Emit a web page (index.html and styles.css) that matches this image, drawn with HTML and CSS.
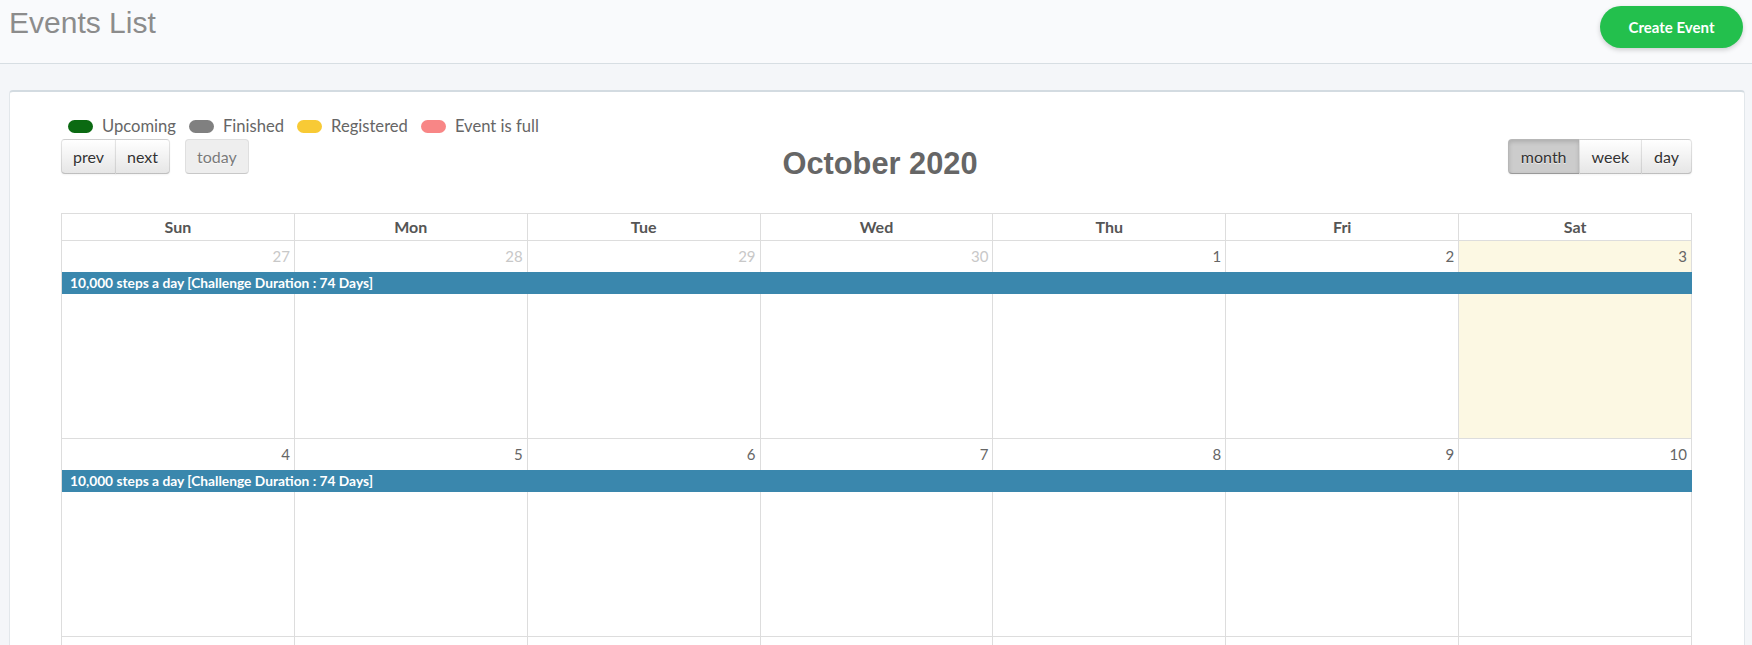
FILE: index.html
```html
<!DOCTYPE html>
<html lang="en">
<head>
<meta charset="utf-8">
<title>Events List</title>
<link rel="stylesheet" href="styles.css">
</head>
<body>
<header class="topbar">
  <h1 class="page-title">Events List</h1>
  <button class="btn-create">Create Event</button>
</header>
<main class="content">
  <section class="card">
    <div class="legend">
      <span class="legend-item"><span class="dot dot-upcoming"></span>Upcoming</span>
      <span class="legend-item"><span class="dot dot-finished"></span>Finished</span>
      <span class="legend-item"><span class="dot dot-registered"></span>Registered</span>
      <span class="legend-item"><span class="dot dot-full"></span>Event is full</span>
    </div>
    <div class="toolbar">
      <div class="tb-left">
        <div class="btn-group">
          <button class="fc-btn">prev</button><button class="fc-btn">next</button>
        </div>
        <button class="fc-btn is-disabled">today</button>
      </div>
      <h2 class="cal-title">October 2020</h2>
      <div class="tb-right">
        <div class="btn-group">
          <button class="fc-btn is-active">month</button><button class="fc-btn">week</button><button class="fc-btn">day</button>
        </div>
      </div>
    </div>
    <div class="calendar">
      <div class="cal-head">
        <div class="head-cell">Sun</div>
        <div class="head-cell">Mon</div>
        <div class="head-cell">Tue</div>
        <div class="head-cell">Wed</div>
        <div class="head-cell">Thu</div>
        <div class="head-cell">Fri</div>
        <div class="head-cell">Sat</div>
      </div>
      <div class="week">
        <div class="week-bg">
          <div class="bg-cell"></div><div class="bg-cell"></div><div class="bg-cell"></div><div class="bg-cell"></div><div class="bg-cell"></div><div class="bg-cell"></div><div class="bg-cell is-today"></div>
        </div>
        <div class="week-content">
          <div class="day-num is-other">27</div>
          <div class="day-num is-other">28</div>
          <div class="day-num is-other">29</div>
          <div class="day-num is-other">30</div>
          <div class="day-num">1</div>
          <div class="day-num">2</div>
          <div class="day-num">3</div>
          <div class="event">10,000 steps a day [Challenge Duration : 74 Days]</div>
        </div>
      </div>
      <div class="week">
        <div class="week-bg">
          <div class="bg-cell"></div><div class="bg-cell"></div><div class="bg-cell"></div><div class="bg-cell"></div><div class="bg-cell"></div><div class="bg-cell"></div><div class="bg-cell"></div>
        </div>
        <div class="week-content">
          <div class="day-num">4</div>
          <div class="day-num">5</div>
          <div class="day-num">6</div>
          <div class="day-num">7</div>
          <div class="day-num">8</div>
          <div class="day-num">9</div>
          <div class="day-num">10</div>
          <div class="event">10,000 steps a day [Challenge Duration : 74 Days]</div>
        </div>
      </div>
      <div class="week week-last">
        <div class="week-bg">
          <div class="bg-cell"></div><div class="bg-cell"></div><div class="bg-cell"></div><div class="bg-cell"></div><div class="bg-cell"></div><div class="bg-cell"></div><div class="bg-cell"></div>
        </div>
      </div>
    </div>
  </section>
</main>
</body>
</html>
```

FILE: styles.css
```css
html, body {
  margin: 0;
  padding: 0;
  overflow: hidden;
}

body {
  background: #f4f6f9;
  font-family: Lato, "Noto Sans", sans-serif;
  color: #666;
}

.topbar {
  height: 63px;
  display: flex;
  justify-content: space-between;
  align-items: flex-start;
  background: #f9fafc;
  border-bottom: 1px solid #d7dee3;
  padding: 0 9px 0 9px;
}

.page-title {
  margin: 8px 0 0 0;
  font-family: "Liberation Sans", Arial, sans-serif;
  font-weight: normal;
  font-size: 30px;
  line-height: 30px;
  color: #8c8c8c;
}

.btn-create {
  margin-top: 6px;
  width: 143px;
  height: 42px;
  border: none;
  border-radius: 21px;
  background: #23c04d;
  color: #fff;
  font-family: Lato, sans-serif;
  font-weight: bold;
  font-size: 15px;
  box-shadow: 0 2px 5px rgba(0, 0, 0, 0.18);
  padding: 0;
}

.content {
  padding: 26px 7px 0 9px;
}

.card {
  background: #fff;
  border: 1px solid #e2e7eb;
  border-top: 2px solid #d3dbe1;
  border-radius: 4px 4px 0 0;
  padding: 24px 52px 0 51px;
  height: 700px;
}

.legend {
  display: flex;
  align-items: center;
  height: 20px;
  line-height: 20px;
  font-size: 16.6px;
  color: #666;
  padding-left: 7px;
}

.legend-item {
  display: flex;
  align-items: center;
  margin-right: 13px;
}

.dot {
  display: inline-block;
  width: 25px;
  height: 13px;
  border-radius: 7px;
  margin-right: 9px;
}

.dot-upcoming { background: #0b6a12; }
.dot-finished { background: #808080; }
.dot-registered { background: #f8ca35; }
.dot-full { background: #f88686; }

.toolbar {
  margin-top: 3px;
  height: 35px;
  display: grid;
  grid-template-columns: 1fr auto 1fr;
  align-items: start;
}

.tb-left {
  display: flex;
  gap: 15px;
}

.tb-right {
  display: flex;
  justify-content: flex-end;
}

.btn-group {
  display: flex;
}

.fc-btn {
  height: 35px;
  margin: 0;
  padding: 0 11px;
  font-family: Lato, sans-serif;
  font-size: 16px;
  color: #333;
  background-color: #f5f5f5;
  background-image: linear-gradient(to bottom, #ffffff, #e6e6e6);
  border: 1px solid;
  border-color: rgba(0, 0, 0, 0.1) rgba(0, 0, 0, 0.1) rgba(0, 0, 0, 0.25);
  border-radius: 4px;
  text-shadow: 0 1px 1px rgba(255, 255, 255, 0.75);
  box-shadow: inset 0 1px 0 rgba(255, 255, 255, 0.2), 0 1px 2px rgba(0, 0, 0, 0.05);
}

.tb-right .fc-btn {
  padding: 0 12px;
}

.btn-group .fc-btn {
  border-radius: 0;
}

.btn-group .fc-btn + .fc-btn {
  margin-left: -1px;
}

.btn-group .fc-btn:first-child {
  border-radius: 4px 0 0 4px;
}

.btn-group .fc-btn:last-child {
  border-radius: 0 4px 4px 0;
}

.fc-btn.is-active {
  background-color: #cccccc;
  background-image: none;
  box-shadow: inset 0 2px 4px rgba(0, 0, 0, 0.15), 0 1px 2px rgba(0, 0, 0, 0.05);
}

.fc-btn.is-disabled {
  background-image: none;
  background-color: #e6e6e6;
  box-shadow: none;
  opacity: 0.65;
  padding: 0 11px;
}

.cal-title {
  margin: 7px 0 0 0;
  padding-left: 7px;
  font-family: "Liberation Sans", Arial, sans-serif;
  font-weight: bold;
  font-size: 30.8px;
  line-height: 35px;
  color: #666;
}

.calendar {
  margin-top: 39px;
  border-left: 1px solid #ddd;
  border-top: 1px solid #ddd;
}

.cal-head {
  display: grid;
  grid-template-columns: repeat(7, 1fr);
}

.head-cell {
  height: 26px;
  line-height: 26px;
  text-align: center;
  font-weight: bold;
  font-size: 16px;
  color: #555;
  border-right: 1px solid #ddd;
  border-bottom: 1px solid #ddd;
}

.week {
  display: grid;
  height: 198px;
}

.week-bg,
.week-content {
  grid-area: 1 / 1;
  display: grid;
  grid-template-columns: repeat(7, 1fr);
}

.week-content {
  align-content: start;
}

.bg-cell {
  border-right: 1px solid #ddd;
  border-bottom: 1px solid #ddd;
}

.bg-cell.is-today {
  background: #fcf8e3;
}

.day-num {
  text-align: right;
  padding: 6px 5px 0 0;
  font-size: 15px;
  line-height: 18px;
  color: #666;
}

.day-num.is-other {
  color: #c8c8c8;
}

.event {
  grid-column: 1 / -1;
  margin-top: 7px;
  height: 22px;
  line-height: 22px;
  background: #3a87ad;
  color: #fff;
  font-size: 13.75px;
  font-weight: bold;
  padding-left: 8px;
}
```
